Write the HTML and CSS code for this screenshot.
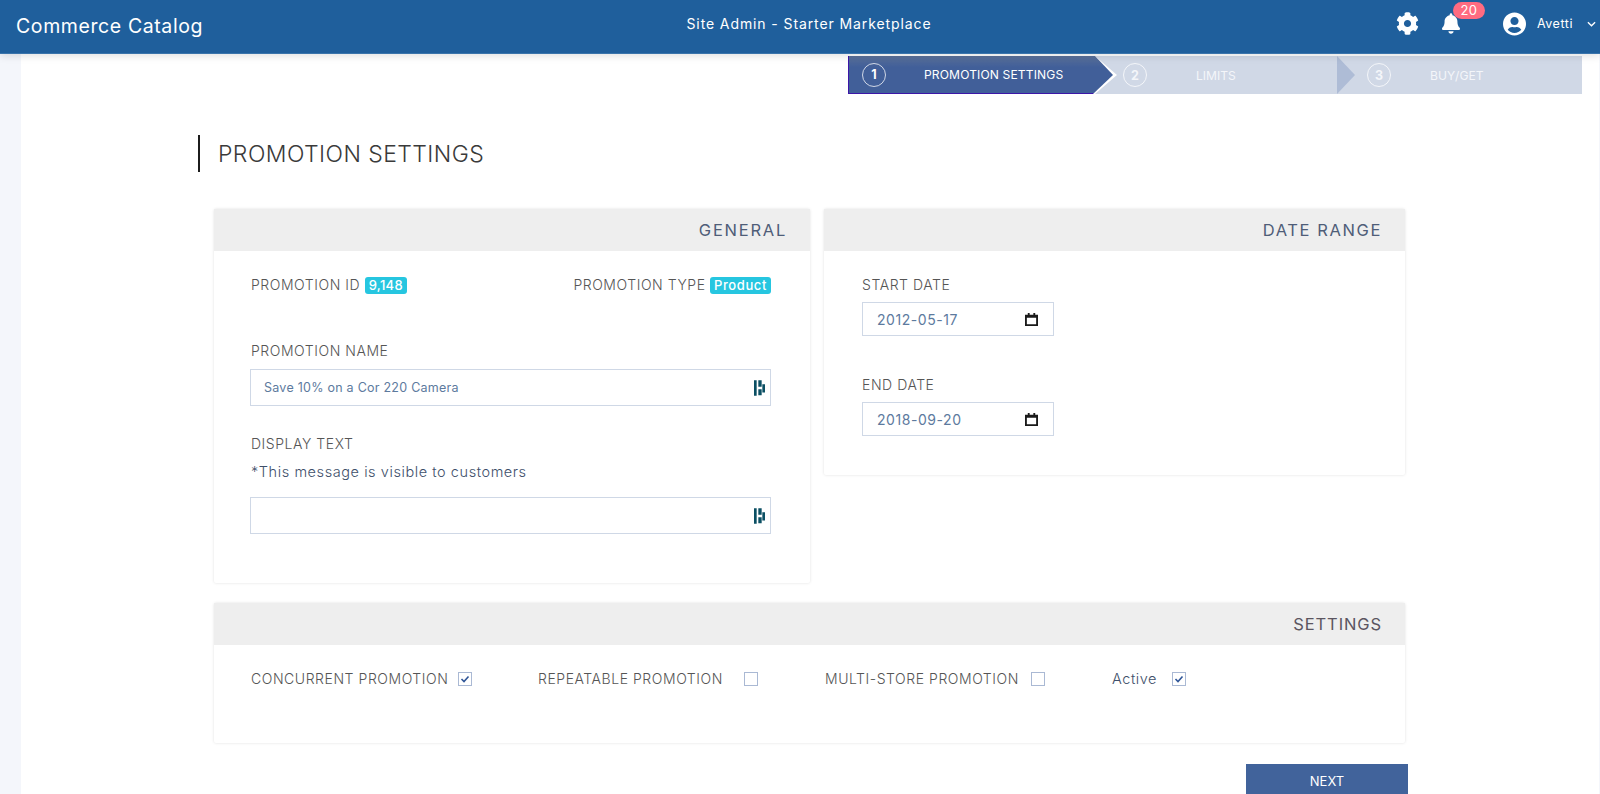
FILE: index.html
```html
<!DOCTYPE html>
<html lang="en">
<head>
<meta charset="utf-8">
<title>Promotion Settings</title>
<link rel="stylesheet" href="styles.css">
</head>
<body>
<header class="topbar">
  <div class="brand">Commerce Catalog</div>
  <div class="site">Site Admin - Starter Marketplace</div>
  <div class="tools">
    <svg class="gear" viewBox="0 0 512 512"><path fill="#fff" d="M487.4 315.7l-42.6-24.6c4.3-23.2 4.3-47 0-70.2l42.6-24.6c4.9-2.8 7.1-8.6 5.5-14-11.1-35.6-30-67.8-54.7-94.6-3.8-4.1-10-5.1-14.8-2.3L380.8 110c-17.9-15.4-38.5-27.3-60.8-35.1V25.8c0-5.6-3.9-10.5-9.4-11.7-36.7-8.2-74.3-7.8-109.2 0-5.5 1.2-9.4 6.1-9.4 11.7V75c-22.2 7.9-42.8 19.8-60.8 35.1L88.7 85.5c-4.9-2.8-11-1.9-14.8 2.3-24.7 26.7-43.6 58.9-54.7 94.6-1.7 5.4.6 11.2 5.5 14L67.3 221c-4.3 23.2-4.3 47 0 70.2l-42.6 24.6c-4.9 2.8-7.1 8.6-5.5 14 11.1 35.6 30 67.8 54.7 94.6 3.8 4.1 10 5.1 14.8 2.3l42.6-24.6c17.9 15.4 38.5 27.3 60.8 35.1v49.2c0 5.6 3.9 10.5 9.4 11.7 36.7 8.2 74.3 7.8 109.2 0 5.5-1.2 9.4-6.1 9.4-11.7v-49.2c22.2-7.9 42.8-19.8 60.8-35.1l42.6 24.6c4.9 2.8 11 1.9 14.8-2.3 24.7-26.7 43.6-58.9 54.7-94.6 1.5-5.5-.7-11.3-5.6-14.1zM256 336c-44.1 0-80-35.9-80-80s35.9-80 80-80 80 35.9 80 80-35.9 80-80 80z"/></svg>
    <div class="bell-wrap">
      <svg class="bell" viewBox="0 0 448 512"><path fill="#fff" d="M224 512c35.3 0 64-28.7 64-64H160c0 35.3 28.7 64 64 64zm215.4-149.7c-19.3-20.8-55.5-52-55.5-154.3 0-77.7-54.5-139.9-127.9-155.2V32c0-17.7-14.3-32-32-32s-32 14.3-32 32v20.8C118.6 68.1 64.1 130.3 64.1 208c0 102.3-36.2 133.5-55.5 154.3-6 6.4-8.7 14.1-8.6 21.7.1 16.4 13 32 32.1 32h383.8c19.1 0 32-15.6 32.1-32 .1-7.6-2.6-15.3-8.6-21.7z"/></svg>
      <span class="count">20</span>
    </div>
    <svg class="avatar" viewBox="0 0 496 512"><path fill="#fff" d="M248 8C111 8 0 119 0 256s111 248 248 248 248-111 248-248S385 8 248 8zm0 96c48.6 0 88 39.4 88 88s-39.4 88-88 88-88-39.4-88-88 39.4-88 88-88zm0 344c-58.7 0-111.3-26.6-146.5-68.2 18.8-35.4 55.6-59.8 98.5-59.8 2.4 0 4.8.4 7.1 1.1 13 4.2 26.6 6.9 40.9 6.9 14.3 0 28-2.7 40.9-6.9 2.3-.7 4.7-1.1 7.1-1.1 42.9 0 79.7 24.4 98.5 59.8C359.3 421.4 306.7 448 248 448z"/></svg>
    <span class="user">Avetti</span>
    <svg class="caret" viewBox="0 0 10 6"><path d="M1 1l4 4 4-4" fill="none" stroke="#fff" stroke-width="1.5"/></svg>
  </div>
</header>

<main class="page">
  <nav class="stepper">
    <div class="step step-active">
      <span class="num">1</span><span class="step-label">PROMOTION SETTINGS</span>
    </div>
    <div class="step step-second">
      <span class="num">2</span><span class="step-label">LIMITS</span>
    </div>
    <div class="step step-third">
      <span class="num">3</span><span class="step-label">BUY/GET</span>
    </div>
  </nav>

  <div class="content">
    <h1 class="title">PROMOTION SETTINGS</h1>

    <div class="cards">
      <section class="card card-general">
        <h2 class="card-head head-general">GENERAL</h2>
        <div class="card-body general-body">
          <div class="meta">
            <span class="label">PROMOTION ID <b class="tag tag-id">9,148</b></span>
            <span class="label">PROMOTION TYPE <b class="tag tag-type">Product</b></span>
          </div>
          <div class="label name-label">PROMOTION NAME</div>
          <div class="field">
            <input class="field-input" type="text" value="Save 10% on a Cor 220 Camera">
            <svg class="dash" viewBox="0 0 33 47"><path fill="#0b4f63" d="M0 0h8v47H0zM13 0h10v20H13zM13 27h10v18H13zM25 12h8v25h-8z"/></svg>
          </div>
          <div class="label display-label">DISPLAY TEXT</div>
          <p class="hint">*This message is visible to customers</p>
          <div class="field">
            <input class="field-input" type="text" value="">
            <svg class="dash" viewBox="0 0 33 47"><path fill="#0b4f63" d="M0 0h8v47H0zM13 0h10v20H13zM13 27h10v18H13zM25 12h8v25h-8z"/></svg>
          </div>
        </div>
      </section>

      <section class="card card-date">
        <h2 class="card-head head-date">DATE RANGE</h2>
        <div class="card-body date-body">
          <div class="label">START DATE</div>
          <div class="date">
            <span class="date-value">2012-05-17</span>
            <svg class="cal" viewBox="0 0 14 14"><path d="M3 0h2v2h4V0h2v2h3v12H0V2h3zM2 5v7h10V5z" fill="#1a1a1a"/></svg>
          </div>
          <div class="label end-label">END DATE</div>
          <div class="date">
            <span class="date-value">2018-09-20</span>
            <svg class="cal" viewBox="0 0 14 14"><path d="M3 0h2v2h4V0h2v2h3v12H0V2h3zM2 5v7h10V5z" fill="#1a1a1a"/></svg>
          </div>
        </div>
      </section>

      <section class="card card-settings">
        <h2 class="card-head head-settings">SETTINGS</h2>
        <div class="card-body settings-body">
          <div class="opt opt-concurrent"><span class="label">CONCURRENT PROMOTION</span><span class="box"><svg viewBox="0 0 12 12"><path d="M2.5 6L5 8.5l4.5-5" fill="none" stroke="#2f5597" stroke-width="1.6"/></svg></span></div>
          <div class="opt opt-repeatable"><span class="label">REPEATABLE PROMOTION</span><span class="box"></span></div>
          <div class="opt opt-multi"><span class="label">MULTI-STORE PROMOTION</span><span class="box"></span></div>
          <div class="opt opt-active"><span class="label label-active">Active</span><span class="box"><svg viewBox="0 0 12 12"><path d="M2.5 6L5 8.5l4.5-5" fill="none" stroke="#2f5597" stroke-width="1.6"/></svg></span></div>
        </div>
      </section>
    </div>

    <div class="actions"><button class="next" type="button">NEXT</button></div>
  </div>
</main>
</body>
</html>
```

FILE: styles.css
```css
* { box-sizing: border-box; }
html, body { margin: 0; height: 794px; overflow: hidden; }
body {
  background: #f4f6fb;
  font-family: "Inter", "Open Sans", sans-serif;
  color: #6b6b6b;
}

.topbar {
  position: relative;
  z-index: 2;
  height: 54px;
  background: #1f5f9c;
  border-bottom: 1px solid #3a74ab;
  box-shadow: 0 2px 8px rgba(0, 0, 0, .12);
  display: grid;
  grid-template-columns: 1fr auto 1fr;
  align-items: center;
  color: #fff;
}
.brand { padding-left: 16px; font-size: 19.5px; letter-spacing: .6px; margin-top: -1px; }
.site { font-size: 14px; letter-spacing: .9px; margin: -6px 0 0 18px; }
.tools { display: flex; align-items: center; justify-content: flex-end; padding-right: 4px; margin-top: -6px; }
.gear { width: 23px; height: 23px; margin-right: 23px; }
.bell-wrap { position: relative; width: 18px; height: 21px; margin-right: 43px; }
.bell { width: 18px; height: 21px; display: block; }
.count {
  position: absolute;
  left: 11px;
  top: -11px;
  width: 32px;
  height: 17px;
  border-radius: 9px;
  background: #ff6b81;
  font-size: 13px;
  line-height: 17px;
  text-align: center;
  letter-spacing: .3px;
}
.avatar { width: 23px; height: 24px; margin-right: 11px; }
.user { font-size: 12.5px; letter-spacing: .55px; margin-right: 14px; }
.caret { width: 9px; height: 6px; }

.page {
  margin-left: 21px;
  width: 1578px;
  height: 740px;
  background: #fff;
  position: relative;
}

.stepper {
  display: flex;
  justify-content: flex-end;
  padding-top: 2px;
  padding-right: 17px;
}
.step {
  position: relative;
  height: 38px;
  display: flex;
  align-items: center;
  background: #d0d8e6;
  color: #f4f6fa;
  font-size: 12.1px;
}
.step-active {
  width: 265px;
  padding-left: 13px;
  color: #fff;
  background: linear-gradient(#5a7099, #415f99 30%);
  border-left: 1px solid #3c16a8;
  border-bottom: 1px solid #3c16a8;
  clip-path: polygon(0 0, 247px 0, 100% 50%, 245px 100%, 0 100%);
  z-index: 1;
}
.step-second { width: 242px; margin-left: -18px; }
.step-third { width: 245px; }
.step-second::before {
  content: "";
  position: absolute;
  left: 0;
  top: 0;
  border-style: solid;
  border-width: 19px 0 19px 22px;
  border-color: transparent transparent transparent #fff;
}
.step-third::before {
  content: "";
  position: absolute;
  left: 0;
  top: 0;
  border-style: solid;
  border-width: 19px 0 19px 18px;
  border-color: transparent transparent transparent #aebcd6;
}
.num {
  width: 24px;
  height: 24px;
  flex: none;
  border-radius: 50%;
  border: 1px solid rgba(255, 255, 255, .75);
  display: grid;
  place-items: center;
  font-weight: 700;
  font-size: 12.5px;
}
.step-active .step-label { margin-left: 38px; letter-spacing: .12px; }
.step-second .num { margin-left: 28px; }
.step-second .step-label { margin-left: 49px; }
.step-third .num { margin-left: 30px; }
.step-third .step-label { margin-left: 39px; }

.content { padding: 0 0 0 177px; }
.title {
  margin: 41px 0 0;
  height: 37px;
  border-left: 2px solid #1c1c1c;
  padding-left: 18px;
  font-size: 23px;
  line-height: 39px;
  font-weight: 300;
  letter-spacing: .43px;
  color: #3a3a3a;
}
.cards {
  margin: 37px 0 0 16px;
  display: grid;
  grid-template-columns: 596px 581px;
  column-gap: 14px;
  row-gap: 20px;
  width: 1191px;
  grid-template-rows: 374px 140px;
}
.card {
  background: #fff;
  box-shadow: 0 0 3px rgba(0, 0, 0, .13);
  border-radius: 2px;
  align-self: start;
}
.card-general { height: 374px; }
.card-date { height: 266px; }
.card-settings { grid-column: 1 / 3; height: 140px; }
.card-head {
  margin: 0;
  height: 42px;
  background: #eee;
  text-align: right;
  padding-right: 23px;
  font-size: 16.5px;
  font-weight: 400;
  line-height: 42px;
  letter-spacing: .9px;
  color: #4f5d78;
}
.head-general { letter-spacing: 1.75px; }
.head-date { letter-spacing: 1.6px; }
.head-settings { color: #5b5560; }
.label {
  font-size: 14px;
  font-weight: 300;
  color: #555;
  letter-spacing: .55px;
  white-space: nowrap;
}
.card-body { padding: 0 39px 0 37px; }
.general-body { padding-top: 25px; }
.general-body .field { margin-left: -1px; }
.meta { display: flex; justify-content: space-between; height: 18px; align-items: center; }
.tag {
  display: inline-block;
  height: 17px;
  padding: 0 4px;
  border-radius: 3px;
  background: #26c6e0;
  color: #fff;
  font-size: 13px;
  font-weight: 500;
  line-height: 17px;
  letter-spacing: .3px;
}
.tag-type { letter-spacing: .6px; }
.name-label { margin-top: 48px; line-height: 18px; }
.field {
  margin-top: 9px;
  height: 37px;
  border: 1px solid #cfd8e6;
  display: flex;
  align-items: center;
  padding: 0 5px 0 13px;
}
.field-input {
  flex: 1;
  min-width: 0;
  border: 0;
  outline: 0;
  padding: 0;
  background: transparent;
  font: inherit;
  font-size: 12.5px;
  color: #5d7a9e;
  letter-spacing: .25px;
}
.dash { width: 11px; height: 16px; flex: none; }
.display-label { margin-top: 29px; line-height: 18px; }
.hint { margin: 10px 0 16px; font-size: 14.5px; font-weight: 300; line-height: 18px; color: #3e4f6a; letter-spacing: .57px; }

.date-body { padding: 25px 38px 0; }
.date {
  margin-top: 9px;
  width: 192px;
  height: 34px;
  border: 1px solid #cfd8e6;
  display: flex;
  align-items: center;
  justify-content: space-between;
  padding: 0 15px 0 14px;
}
.date-value { font-size: 14px; letter-spacing: .55px; color: #5d7a9e; }
.cal { width: 13px; height: 13px; }
.end-label { margin-top: 40px; display: block; }

.settings-body { display: flex; padding-top: 25px; align-items: center; }
.opt { display: flex; align-items: center; flex: none; width: 287px; }
.opt-concurrent .box { margin-left: 10px; }
.opt-repeatable .box { margin-left: 21px; }
.opt-multi .box { margin-left: 12px; }
.opt-active .box { margin-left: 15px; }
.label-active { color: #3e4f6a; font-size: 14.5px; }
.box {
  width: 14px;
  height: 14px;
  border: 1px solid #aab9d4;
  display: block;
  flex: none;
  background: #fff;
}
.box svg { display: block; width: 12px; height: 12px; }

.actions { margin: 21px 0 0 1048px; }
.next {
  display: block;
  width: 162px;
  height: 40px;
  border: 0;
  background: #41639b;
  color: #fff;
  font: inherit;
  font-size: 13px;
  padding: 0 0 7px;
}
```
